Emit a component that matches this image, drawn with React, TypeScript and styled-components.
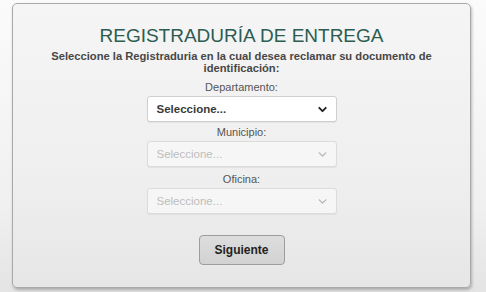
import React from 'react';
import styled, { createGlobalStyle } from 'styled-components';
import { ChevronDown } from 'lucide-react';

const GlobalStyle = createGlobalStyle`
  html, body {
    margin: 0;
    padding: 0;
  }
  body {
    width: 486px;
    height: 292px;
    overflow: hidden;
    background: linear-gradient(to bottom, #fbfbfb 0%, #f0f0f0 70%, #e4e4e4 100%);
    font-family: "Liberation Sans", Arial, sans-serif;
  }
`;

const Card = styled.div`
  box-sizing: border-box;
  width: 459px;
  height: 285px;
  margin: 3px 0 0 12px;
  border: 1.5px solid #a9a9a9;
  border-radius: 5px;
  background: linear-gradient(to bottom, #f5f5f5 0%, #efefef 60%, #e6e6e6 100%);
  box-shadow: 1px 2px 3px rgba(0, 0, 0, 0.25);
  display: flex;
  flex-direction: column;
  align-items: center;
  padding-top: 21px;
`;

const Title = styled.h1`
  margin: 0;
  font-size: 19px;
  font-weight: normal;
  color: #2c5c52;
  line-height: 22px;
`;

const Lead = styled.p`
  margin: 3px 0 0;
  width: 420px;
  text-align: center;
  font-size: 11.2px;
  font-weight: bold;
  color: #474747;
  line-height: 12px;
`;

const Field = styled.div<{ $gap: number }>`
  display: flex;
  flex-direction: column;
  align-items: center;
  margin-top: ${(p) => p.$gap}px;
`;

const Label = styled.label`
  font-size: 11px;
  color: #555;
  line-height: 13px;
  margin-bottom: 2px;
`;

const Select = styled.div<{ $disabled?: boolean }>`
  box-sizing: border-box;
  width: 190px;
  height: 26px;
  display: flex;
  align-items: center;
  justify-content: space-between;
  padding: 0 7px 0 9px;
  border: 1px solid ${(p) => (p.$disabled ? '#dcdcdc' : '#cfcfcf')};
  border-radius: 3px;
  background: ${(p) => (p.$disabled ? '#f6f6f6' : '#ffffff')};
  color: ${(p) => (p.$disabled ? '#bdbdbd' : '#3a3a3a')};
  font-size: 11.5px;
  font-weight: ${(p) => (p.$disabled ? 'normal' : 'bold')};
  box-shadow: 0 1px 1px rgba(0, 0, 0, 0.06);
`;

const Button = styled.button`
  margin-top: 21px;
  width: 86px;
  height: 30px;
  border: 1px solid #9d9d9d;
  border-radius: 4px;
  background: linear-gradient(to bottom, #dddddd, #d2d2d2);
  font-family: "Liberation Sans", Arial, sans-serif;
  font-size: 12px;
  font-weight: bold;
  color: #222;
  padding: 0;
`;

const fields = [
  { label: 'Departamento:', disabled: false, gap: 7 },
  { label: 'Municipio:', disabled: true, gap: 4 },
  { label: 'Oficina:', disabled: true, gap: 6 },
];

export default function App() {
  return (
    <>
      <GlobalStyle />
      <Card>
        <Title>REGISTRADURÍA DE ENTREGA</Title>
        <Lead>
          Seleccione la Registraduria en la cual desea reclamar su documento de identificación:
        </Lead>
        {fields.map((f) => (
          <Field key={f.label} $gap={f.gap}>
            <Label>{f.label}</Label>
            <Select $disabled={f.disabled}>
              <span>Seleccione...</span>
              <ChevronDown
                size={13}
                strokeWidth={f.disabled ? 2.5 : 3.5}
                color={f.disabled ? '#b5b5b5' : '#222'}
              />
            </Select>
          </Field>
        ))}
        <Button>Siguiente</Button>
      </Card>
    </>
  );
}
